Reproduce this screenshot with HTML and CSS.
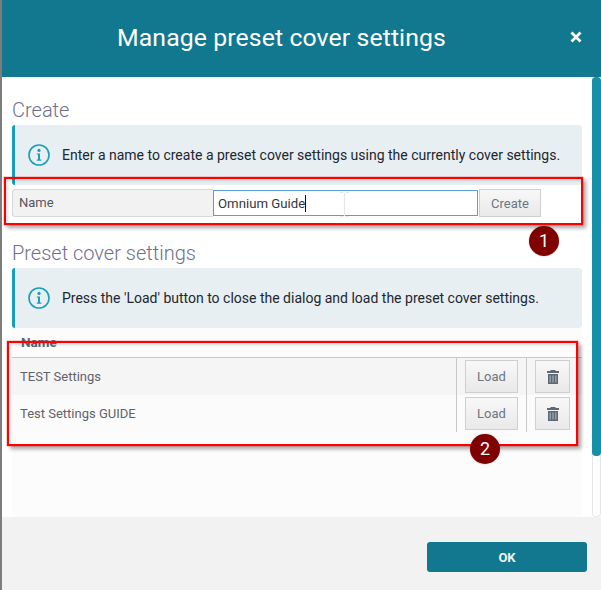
FILE: index.html
```html
<!DOCTYPE html>
<html lang="en">
<head>
<meta charset="utf-8">
<title>Manage preset cover settings</title>
<link rel="stylesheet" href="styles.css">
</head>
<body>
<div class="strip"></div>
<div class="dialog">
  <header class="head">
    <h1 class="title">Manage preset cover settings</h1>
    <svg class="close" width="12" height="12" viewBox="0 0 12 12"><path d="M1.500 1.500l9 9M10.500 1.500l-9 9" stroke="#fff" stroke-width="2.800" fill="none"/></svg>
  </header>
  <div class="main">
    <div class="content">
      <h2 class="section first">Create</h2>
      <div class="info">
        <svg class="info-icon" width="24" height="24" viewBox="0 0 24 24"><circle cx="12" cy="12" r="10" fill="none" stroke="#1a9fb8" stroke-width="1.600"/><circle cx="12" cy="7.400" r="1.600" fill="#1a9fb8"/><path d="M9.800 10.400h3.200v6.200h1.400v1.200H9.800v-1.200h1.200v-5H9.800z" fill="#1a9fb8"/></svg>
        <span>Enter a name to create a preset cover settings using the currently cover settings.</span>
      </div>
      <div class="form-row">
        <div class="label">Name</div>
        <div class="field"><span class="typed">Omnium Guide</span></div>
        <button class="btn create">Create</button>
      </div>
      <h2 class="section second">Preset cover settings</h2>
      <div class="info">
        <svg class="info-icon" width="24" height="24" viewBox="0 0 24 24"><circle cx="12" cy="12" r="10" fill="none" stroke="#1a9fb8" stroke-width="1.600"/><circle cx="12" cy="7.400" r="1.600" fill="#1a9fb8"/><path d="M9.800 10.400h3.200v6.200h1.400v1.200H9.800v-1.200h1.200v-5H9.800z" fill="#1a9fb8"/></svg>
        <span>Press the 'Load' button to close the dialog and load the preset cover settings.</span>
      </div>
      <div class="table">
        <div class="thead">Name</div>
        <div class="row odd">
          <div class="cell-name">TEST Settings</div>
          <div class="cell-load"><button class="btn load">Load</button></div>
          <div class="cell-del"><button class="btn del"><svg width="12" height="14" viewBox="0 0 12 14"><path d="M4 0h4l1 1h3v2H0V1h3z" fill="#5e6a73"/><path d="M1 4h10v10H1z" fill="#5e6a73"/><path d="M3.200 5.500v7M6 5.500v7M8.800 5.500v7" stroke="#a3adb4" stroke-width="1.200"/></svg></button></div>
        </div>
        <div class="row even">
          <div class="cell-name">Test Settings GUIDE</div>
          <div class="cell-load"><button class="btn load">Load</button></div>
          <div class="cell-del"><button class="btn del"><svg width="12" height="14" viewBox="0 0 12 14"><path d="M4 0h4l1 1h3v2H0V1h3z" fill="#5e6a73"/><path d="M1 4h10v10H1z" fill="#5e6a73"/><path d="M3.200 5.500v7M6 5.500v7M8.800 5.500v7" stroke="#a3adb4" stroke-width="1.200"/></svg></button></div>
        </div>
      </div>
    </div>
    <div class="scrollbar"><div class="thumb"></div></div>
  </div>
  <footer class="foot"><button class="ok">OK</button></footer>
</div>
<div class="callout one"></div>
<div class="callout two"></div>
<div class="badge b1">1</div>
<div class="badge b2">2</div>
<svg class="ibeam" width="9" height="25" viewBox="0 0 9 25"><path d="M0 .5h3.500M5.500 .5H9M4.500 1v23M0 24.500h3.500M5.500 24.500H9" stroke="#e4e8ea" stroke-width="1.200" fill="none"/></svg>
</body>
</html>
```
FILE: styles.css
```css
* { box-sizing: border-box; }
html, body { margin: 0; height: 590px; overflow: hidden; }
body {
  display: flex;
  position: relative;
  width: 601px;
  font-family: Roboto, "Liberation Sans", sans-serif;
  background: #fff;
}
.strip { width: 2px; background: #7d7d7d; flex: none; }
.dialog { flex: 1; display: flex; flex-direction: column; min-width: 0; }
.head {
  height: 77px;
  flex: none;
  background: #12788f;
  display: flex;
  align-items: center;
  justify-content: center;
  position: relative;
  padding-bottom: 2px;
  padding-right: 40px;
}
.title { margin: 0; color: #fff; font-size: 24.800px; font-weight: 400; letter-spacing: 0.1px; }
.close { position: absolute; right: 19px; top: 31px; }
.main { flex: 1; display: flex; min-height: 0; }
.content { flex: 1; padding-left: 10px; padding-right: 10px; display: flex; flex-direction: column; }
.section { margin: 0; font-size: 20px; line-height: 24px; font-weight: 300; color: #6f6f8c; }
.section.first { margin-top: 21px; margin-bottom: 3px; }
.section.second { margin-top: 24px; margin-bottom: 3px; }
.info {
  height: 60px;
  flex: none;
  background: #e7eff2;
  border-left: 3px solid #14a0bb;
  border-radius: 3px;
  display: flex;
  align-items: center;
  gap: 11px;
  padding-left: 12px;
  font-size: 14px;
  color: #222630;
}
.info-icon { flex: none; }
.form-row { display: flex; height: 28px; margin-top: 4px; align-items: stretch; }
.label {
  width: 201px;
  background: #f2f2f2;
  border: 1px solid #d9d9d9;
  border-right: 0;
  border-radius: 3px 0 0 3px;
  padding-left: 6px;
  font-size: 13px;
  line-height: 25px;
  color: #55555f;
}
.field {
  width: 265px;
  margin: 1px 0;
  background: #fff;
  border: 1px solid #5d9cd8;
  padding-left: 4px;
  font-size: 13.200px;
  line-height: 23px;
  color: #33383f;
}
.typed { border-right: 1px solid #111; display: inline-block; line-height: 17px; vertical-align: middle; }
.btn {
  font-family: inherit;
  border: 1px solid #cfcfcf;
  background: linear-gradient(#f8f8f8, #e9e9e9);
  color: #6d7583;
  font-size: 13px;
  padding: 0;
}
.create { width: 62px; margin-left: 1px; }
.table { flex: 1; background: #fcfcfc; display: flex; flex-direction: column; }
.thead {
  height: 30px;
  flex: none;
  padding: 6px 0 0 9px;
  font-size: 13.500px;
  line-height: 16px;
  font-weight: 700;
  color: #4f6b7a;
  border-bottom: 1px solid #c8c8c8;
}
.row { display: flex; height: 37px; flex: none; font-size: 13px; color: #5f6269; }
.row.odd { background: #f5f5f5; }
.row.even { background: #fbfbfb; }
.cell-name { width: 444px; padding-left: 8px; line-height: 37px; }
.cell-load { width: 70px; border-left: 1px solid #c8c8c8; padding-left: 8px; display: flex; align-items: center; }
.cell-del { flex: 1; border-left: 1px solid #c8c8c8; padding-left: 8px; display: flex; align-items: center; }
.load { width: 53px; height: 33px; }
.del { width: 35px; height: 33px; display: flex; align-items: center; justify-content: center; }
.scrollbar { width: 9px; flex: none; background: #fff; border-left: 1px solid #e6e6e6; border-right: 1px solid #e6e6e6; border-bottom: 1px solid #e6e6e6; border-radius: 0 0 4px 4px; }
.thumb { height: 379px; margin: 0 -1px; background: #1590a8; border-radius: 4px; }
.foot {
  height: 73px;
  flex: none;
  background: #f2f2f2;
  display: flex;
  align-items: flex-start;
  justify-content: flex-end;
  padding: 25px 14px 0 0;
}
.ok {
  width: 160px;
  height: 30px;
  background: #12788f;
  color: #eaf4f6;
  border: 0;
  border-radius: 3px;
  font-family: inherit;
  font-size: 13px;
  font-weight: 700;
}
.callout {
  position: absolute;
  border: 2px solid #ff0000;
  box-shadow: 0 0 1px #ff0000, 3px 3px 4px rgba(0, 0, 0, 0.35), inset 2px 2px 3px rgba(0, 0, 0, 0.12);
}
.callout.one { left: 4px; top: 177px; width: 579px; height: 48px; }
.callout.two { left: 7px; top: 341px; width: 571px; height: 105px; }
.badge {
  position: absolute;
  width: 30px;
  height: 30px;
  border-radius: 50%;
  background: #800000;
  color: #fff;
  text-align: center;
  font-size: 18px;
  line-height: 30px;
  box-shadow: 0 0 2px rgba(0, 0, 0, 0.25);
}
.b1 { left: 529px; top: 226px; }
.b2 { left: 470px; top: 434px; }
.ibeam { position: absolute; left: 340px; top: 192px; }
```
